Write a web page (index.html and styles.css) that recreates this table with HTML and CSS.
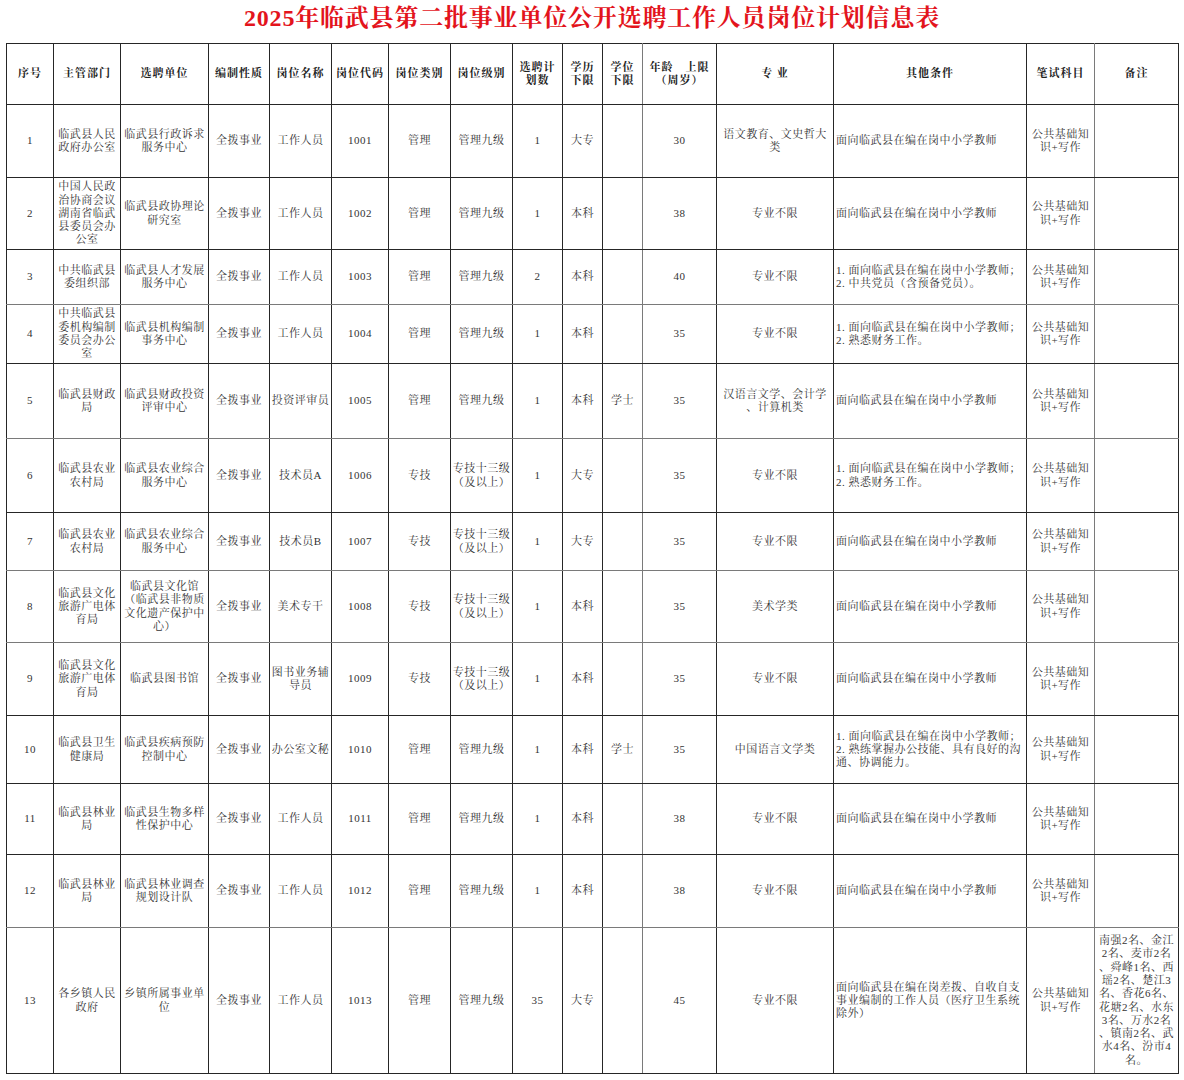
FILE: index.html
```html
<!DOCTYPE html>
<html lang="zh-CN">
<head>
<meta charset="utf-8">
<title>2025年临武县第二批事业单位公开选聘工作人员岗位计划信息表</title>
<link rel="stylesheet" href="styles.css">
</head>
<body>
<h1 class="title">2025年临武县第二批事业单位公开选聘工作人员岗位计划信息表</h1>
<table class="plan">
<colgroup>
<col class="c1"><col class="c2"><col class="c3"><col class="c4"><col class="c5"><col class="c6"><col class="c7"><col class="c8"><col class="c9"><col class="c10"><col class="c11"><col class="c12"><col class="c13"><col class="c14"><col class="c15"><col class="c16">
</colgroup>
<thead>
<tr class="hr">
<th>序号</th><th>主管部门</th><th>选聘单位</th><th>编制性质</th><th>岗位名称</th><th>岗位代码</th><th>岗位类别</th><th>岗位级别</th><th>选聘计<br>划数</th><th>学历<br>下限</th><th>学位<br>下限</th><th>年龄　上限<br>（周岁）</th><th>专&nbsp;业</th><th>其他条件</th><th>笔试科目</th><th>备注</th>
</tr>
</thead>
<tbody>
<tr class="r1">
<td>1</td><td>临武县人民<br>政府办公室</td><td>临武县行政诉求<br>服务中心</td><td>全拨事业</td><td>工作人员</td><td>1001</td><td>管理</td><td>管理九级</td><td>1</td><td>大专</td><td></td><td>30</td><td>语文教育、文史哲大<br>类</td><td>面向临武县在编在岗中小学教师</td><td>公共基础知<br>识+写作</td><td></td>
</tr>
<tr class="r2">
<td>2</td><td>中国人民政<br>治协商会议<br>湖南省临武<br>县委员会办<br>公室</td><td>临武县政协理论<br>研究室</td><td>全拨事业</td><td>工作人员</td><td>1002</td><td>管理</td><td>管理九级</td><td>1</td><td>本科</td><td></td><td>38</td><td>专业不限</td><td>面向临武县在编在岗中小学教师</td><td>公共基础知<br>识+写作</td><td></td>
</tr>
<tr class="r3 gb">
<td>3</td><td>中共临武县<br>委组织部</td><td>临武县人才发展<br>服务中心</td><td>全拨事业</td><td>工作人员</td><td>1003</td><td>管理</td><td>管理九级</td><td>2</td><td>本科</td><td></td><td>40</td><td>专业不限</td><td>1. 面向临武县在编在岗中小学教师；<br>2. 中共党员（含预备党员）。</td><td>公共基础知<br>识+写作</td><td></td>
</tr>
<tr class="r4">
<td>4</td><td>中共临武县<br>委机构编制<br>委员会办公<br>室</td><td>临武县机构编制<br>事务中心</td><td>全拨事业</td><td>工作人员</td><td>1004</td><td>管理</td><td>管理九级</td><td>1</td><td>本科</td><td></td><td>35</td><td>专业不限</td><td>1. 面向临武县在编在岗中小学教师；<br>2. 熟悉财务工作。</td><td>公共基础知<br>识+写作</td><td></td>
</tr>
<tr class="r5 gb">
<td>5</td><td>临武县财政<br>局</td><td>临武县财政投资<br>评审中心</td><td>全拨事业</td><td>投资评审员</td><td>1005</td><td>管理</td><td>管理九级</td><td>1</td><td>本科</td><td>学士</td><td>35</td><td>汉语言文学、会计学<br>、计算机类</td><td>面向临武县在编在岗中小学教师</td><td>公共基础知<br>识+写作</td><td></td>
</tr>
<tr class="r6">
<td>6</td><td>临武县农业<br>农村局</td><td>临武县农业综合<br>服务中心</td><td>全拨事业</td><td>技术员A</td><td>1006</td><td>专技</td><td>专技十三级<br>（及以上）</td><td>1</td><td>大专</td><td></td><td>35</td><td>专业不限</td><td>1. 面向临武县在编在岗中小学教师；<br>2. 熟悉财务工作。</td><td>公共基础知<br>识+写作</td><td></td>
</tr>
<tr class="r7 gb">
<td>7</td><td>临武县农业<br>农村局</td><td>临武县农业综合<br>服务中心</td><td>全拨事业</td><td>技术员B</td><td>1007</td><td>专技</td><td>专技十三级<br>（及以上）</td><td>1</td><td>大专</td><td></td><td>35</td><td>专业不限</td><td>面向临武县在编在岗中小学教师</td><td>公共基础知<br>识+写作</td><td></td>
</tr>
<tr class="r8 gb">
<td>8</td><td>临武县文化<br>旅游广电体<br>育局</td><td>临武县文化馆<br>（临武县非物质<br>文化遗产保护中<br>心）</td><td>全拨事业</td><td>美术专干</td><td>1008</td><td>专技</td><td>专技十三级<br>（及以上）</td><td>1</td><td>本科</td><td></td><td>35</td><td>美术学类</td><td>面向临武县在编在岗中小学教师</td><td>公共基础知<br>识+写作</td><td></td>
</tr>
<tr class="r9">
<td>9</td><td>临武县文化<br>旅游广电体<br>育局</td><td>临武县图书馆</td><td>全拨事业</td><td>图书业务辅<br>导员</td><td>1009</td><td>专技</td><td>专技十三级<br>（及以上）</td><td>1</td><td>本科</td><td></td><td>35</td><td>专业不限</td><td>面向临武县在编在岗中小学教师</td><td>公共基础知<br>识+写作</td><td></td>
</tr>
<tr class="r10">
<td>10</td><td>临武县卫生<br>健康局</td><td>临武县疾病预防<br>控制中心</td><td>全拨事业</td><td>办公室文秘</td><td>1010</td><td>管理</td><td>管理九级</td><td>1</td><td>本科</td><td>学士</td><td>35</td><td>中国语言文学类</td><td>1. 面向临武县在编在岗中小学教师；<br>2. 熟练掌握办公技能、具有良好的沟<br>通、协调能力。</td><td>公共基础知<br>识+写作</td><td></td>
</tr>
<tr class="r11">
<td>11</td><td>临武县林业<br>局</td><td>临武县生物多样<br>性保护中心</td><td>全拨事业</td><td>工作人员</td><td>1011</td><td>管理</td><td>管理九级</td><td>1</td><td>本科</td><td></td><td>38</td><td>专业不限</td><td>面向临武县在编在岗中小学教师</td><td>公共基础知<br>识+写作</td><td></td>
</tr>
<tr class="r12 gb">
<td>12</td><td>临武县林业<br>局</td><td>临武县林业调查<br>规划设计队</td><td>全拨事业</td><td>工作人员</td><td>1012</td><td>管理</td><td>管理九级</td><td>1</td><td>本科</td><td></td><td>38</td><td>专业不限</td><td>面向临武县在编在岗中小学教师</td><td>公共基础知<br>识+写作</td><td></td>
</tr>
<tr class="r13">
<td>13</td><td>各乡镇人民<br>政府</td><td>乡镇所属事业单<br>位</td><td>全拨事业</td><td>工作人员</td><td>1013</td><td>管理</td><td>管理九级</td><td>35</td><td>大专</td><td></td><td>45</td><td>专业不限</td><td>面向临武县在编在岗差拨、自收自支<br>事业编制的工作人员（医疗卫生系统<br>除外）</td><td>公共基础知<br>识+写作</td><td>南强2名、金江<br>2名、麦市2名<br>、舜峰1名、西<br>瑶2名、楚江3<br>名、香花6名、<br>花塘2名、水东<br>3名、万水2名<br>、镇南2名、武<br>水4名、汾市4<br>名。</td>
</tr>
</tbody>
</table>
</body>
</html>
```
FILE: styles.css
```css
html, body {
  margin: 0;
  padding: 0;
  background: #ffffff;
}

body {
  padding: 0 6px;
  font-family: "Liberation Serif", "Noto Serif CJK SC", "Noto Sans CJK SC", serif;
  color: #333333;
}

.title {
  margin: 0;
  height: 43px;
  line-height: 37px;
  text-align: center;
  font-size: 24px;
  font-weight: 700;
  color: #e3141c;
  letter-spacing: 0.8px;
  white-space: nowrap;
}

.plan {
  width: 1173px;
  border-collapse: collapse;
  table-layout: fixed;
  font-size: 11px;
  line-height: 13.3px;
  letter-spacing: 0.5px;
}

.c1 { width: 47px; }
.c2 { width: 67px; }
.c3 { width: 88px; }
.c4 { width: 61px; }
.c5 { width: 62px; }
.c6 { width: 57px; }
.c7 { width: 62px; }
.c8 { width: 62px; }
.c9 { width: 50px; }
.c10 { width: 40px; }
.c11 { width: 40px; }
.c12 { width: 74px; }
.c13 { width: 117px; }
.c14 { width: 193px; }
.c15 { width: 68px; }
.c16 { width: 84px; }

.plan th,
.plan td {
  border: 1px solid #262626;
  padding: 0 1px;
  text-align: center;
  vertical-align: middle;
  white-space: nowrap;
  overflow: visible;
}

.plan th {
  font-weight: 700;
  color: #222222;
  letter-spacing: 1px;
}

.plan tbody td:nth-child(14) {
  text-align: left;
  padding-left: 2px;
}

/* softer grey rules seen in the scan */
.plan th:nth-child(11),
.plan td:nth-child(11),
.plan th:nth-child(15),
.plan td:nth-child(15) {
  border-right-color: #7a7a7a;
}
.plan th:nth-child(12),
.plan td:nth-child(12),
.plan th:nth-child(16),
.plan td:nth-child(16) {
  border-left-color: #7a7a7a;
}
.plan tr.gb td {
  border-bottom-color: #7a7a7a;
}

.hr { height: 61px; }
.r1 { height: 73px; }
.r2 { height: 72px; }
.r3 { height: 55px; }
.r4 { height: 59px; }
.r5 { height: 75px; }
.r6 { height: 74px; }
.r7 { height: 58px; }
.r8 { height: 72px; }
.r9 { height: 73px; }
.r10 { height: 68px; }
.r11 { height: 71px; }
.r12 { height: 73px; }
.r13 { height: 146px; }
```
